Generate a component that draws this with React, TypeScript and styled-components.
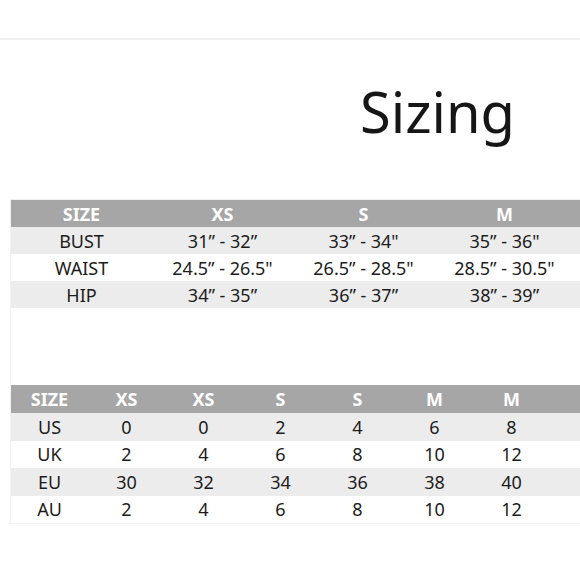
import styled, { createGlobalStyle } from 'styled-components';

const GlobalStyle = createGlobalStyle`
  html, body {
    margin: 0;
    padding: 0;
    background: #ffffff;
    overflow: hidden;
  }
  body {
    font-family: 'Noto Sans', 'Open Sans', sans-serif;
    color: #1c1c1c;
  }
`;

const measurements = {
  columns: ['SIZE', 'XS', 'S', 'M'],
  rows: [
    ['BUST', '31” - 32”', '33” - 34"', '35” - 36"'],
    ['WAIST', '24.5” - 26.5"', '26.5” - 28.5"', '28.5” - 30.5"'],
    ['HIP', '34” - 35”', '36” - 37”', '38” - 39”'],
  ],
};

const conversions = {
  columns: ['SIZE', 'XS', 'XS', 'S', 'S', 'M', 'M'],
  rows: [
    ['US', '0', '0', '2', '4', '6', '8'],
    ['UK', '2', '4', '6', '8', '10', '12'],
    ['EU', '30', '32', '34', '36', '38', '40'],
    ['AU', '2', '4', '6', '8', '10', '12'],
  ],
};

type ChartProps = {
  columns: string[];
  rows: string[][];
  colWidth: number;
  headHeight: number;
  rowHeight: number;
};

// the chart runs off the right edge of the picture, so each row gets an empty trailing cell
const SizeChart = ({ columns, rows, colWidth, headHeight, rowHeight }: ChartProps) => (
  <Table $cols={columns.length} $colWidth={colWidth}>
    <Row $height={headHeight} $head>
      {columns.map((c, i) => (
        <HeadCell key={`h-${i}`}>{c}</HeadCell>
      ))}
      <HeadCell />
    </Row>
    {rows.map((row, r) => (
      <Row key={`r-${r}`} $shaded={r % 2 === 0} $height={rowHeight}>
        {row.map((cell, i) => (
          <Cell key={`r-${r}-${i}`}>{cell}</Cell>
        ))}
        <Cell />
      </Row>
    ))}
  </Table>
);

const App = () => (
  <Page>
    <GlobalStyle />
    <TopBar />
    <Heading>Sizing</Heading>
    <ChartBox>
      <SizeChart {...measurements} colWidth={141} headHeight={27} rowHeight={27} />
      <Spacer />
      <SizeChart {...conversions} colWidth={77} headHeight={28} rowHeight={27.5} />
    </ChartBox>
  </Page>
);

const Page = styled.div`
  width: 580px;
  height: 580px;
  overflow: hidden;
`;

const TopBar = styled.div`
  height: 38px;
  border-bottom: 2px solid #efefef;
`;

const Heading = styled.h1`
  margin: 0;
  height: 159px;
  padding-left: 360px;
  padding-top: 43px;
  box-sizing: border-box;
  font-size: 56px;
  line-height: 1;
  font-weight: 400;
  color: #161616;
`;

const ChartBox = styled.div`
  margin-left: 10px;
  width: 700px;
  border: 1px solid #f1f1f1;
  border-right: none;
`;

const Table = styled.div<{ $cols: number; $colWidth: number }>`
  display: grid;
  grid-template-columns: repeat(${(p) => p.$cols}, ${(p) => p.$colWidth}px) 1fr;
`;

const Row = styled.div<{ $shaded?: boolean; $head?: boolean; $height: number }>`
  display: contents;
  & > div {
    height: ${(p) => p.$height}px;
    background: ${(p) => (p.$head ? '#a6a6a6' : p.$shaded ? '#ececec' : '#ffffff')};
  }
`;

const HeadCell = styled.div`
  display: flex;
  align-items: center;
  justify-content: center;
  color: #ffffff;
  font-weight: 700;
  font-size: 18px;
`;

const Cell = styled.div`
  display: flex;
  align-items: center;
  justify-content: center;
  font-size: 18px;
  color: #1c1c1c;
`;

const Spacer = styled.div`
  height: 77px;
`;

export default App;
